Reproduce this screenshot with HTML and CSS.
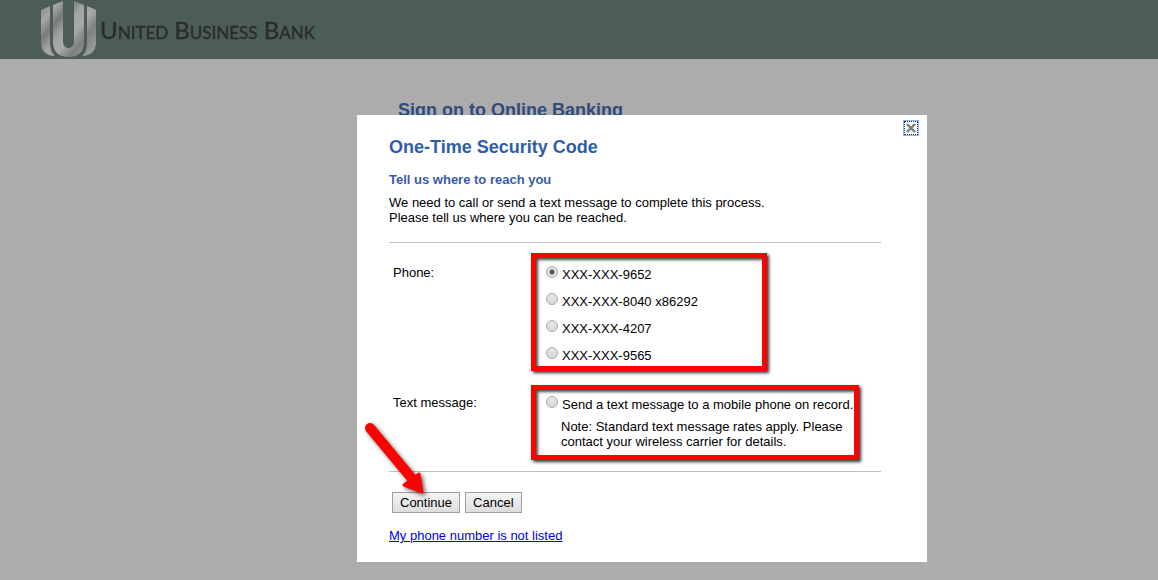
FILE: index.html
```html
<!DOCTYPE html>
<html lang="en">
<head>
    <meta charset="UTF-8">
    <meta name="viewport" content="width=device-width, initial-scale=1.0">
    <title>United Business Bank - Online Banking</title>
    <link rel="stylesheet" href="styles.css">
</head>
<body>

    <header class="site-header">
        <svg class="logo" width="55" height="57" viewBox="0 0 55 57" aria-hidden="true">
            <defs>
                <linearGradient id="metal" gradientUnits="userSpaceOnUse" x1="0" y1="10" x2="50" y2="52">
                    <stop offset="0" stop-color="#8f9192"/>
                    <stop offset="0.12" stop-color="#a5a6a6"/>
                    <stop offset="0.28" stop-color="#77797b"/>
                    <stop offset="0.45" stop-color="#a3a5a5"/>
                    <stop offset="0.6" stop-color="#a8a9a9"/>
                    <stop offset="0.78" stop-color="#7e8082"/>
                    <stop offset="1" stop-color="#9a9c9c"/>
                </linearGradient>
            </defs>
            <g fill="url(#metal)">
                <path d="M0 9 L9 5 V41 C9 47 10 51 14 55 C5 55 0 49 0 42 Z"/>
                <path d="M12 4 L22 0 V40 C22 44 24 47 27.5 47 C31 47 33 44 33 40 V0 L43 4 V41 C43 51 37 56 27.5 56 C18 56 12 51 12 41 Z"/>
                <path d="M55 9 L46 5 V41 C46 47 45 51 41 55 C50 55 55 49 55 42 Z"/>
            </g>
        </svg>
        <span class="bank-name">United Business Bank</span>
    </header>

    <main class="page">
        <h1 class="page-title">Sign on to Online Banking</h1>
    </main>

    <div class="dialog" role="dialog" aria-labelledby="dialog-title">
        <button class="close" type="button" aria-label="Close">
            <svg width="10" height="10" viewBox="0 0 10 10" aria-hidden="true">
                <path d="M1 1 L9 9 M9 1 L1 9" stroke="#777777" stroke-width="2.4"/>
            </svg>
        </button>

        <h2 id="dialog-title">One-Time Security Code</h2>
        <h3>Tell us where to reach you</h3>
        <p class="intro">We need to call or send a text message to complete this process.<br>Please tell us where you can be reached.</p>

        <form>
            <div class="options">
                <div class="row">
                    <span class="row-label" id="phone-label">Phone:</span>
                    <div class="highlight phones" role="group" aria-labelledby="phone-label">
                        <label class="choice"><input type="radio" name="contact" checked><span>XXX-XXX-9652</span></label>
                        <label class="choice"><input type="radio" name="contact"><span>XXX-XXX-8040 x86292</span></label>
                        <label class="choice"><input type="radio" name="contact"><span>XXX-XXX-4207</span></label>
                        <label class="choice"><input type="radio" name="contact"><span>XXX-XXX-9565</span></label>
                    </div>
                </div>
                <div class="row">
                    <span class="row-label" id="text-label">Text message:</span>
                    <div class="highlight texts" role="group" aria-labelledby="text-label">
                        <label class="choice"><input type="radio" name="contact"><span>Send a text message to a mobile phone on record.</span></label>
                        <p class="note">Note: Standard text message rates apply. Please contact your wireless carrier for details.</p>
                    </div>
                </div>
            </div>

            <div class="buttons">
                <button class="btn" type="submit">Continue</button>
                <button class="btn" type="button">Cancel</button>
            </div>
        </form>

        <a class="not-listed" href="#">My phone number is not listed</a>

        <!-- arrow pointing at Continue -->
        <svg class="arrow" width="72" height="82" viewBox="0 0 72 82" aria-hidden="true">
            <path d="M9 9 L53 62" stroke="#ff0000" stroke-width="10" stroke-linecap="round"/>
            <path d="M61 73 L43 66 L58 55 Z" fill="#ff0000" stroke="#ff0000" stroke-width="3" stroke-linejoin="round"/>
        </svg>
    </div>

</body>
</html>
```

FILE: styles.css
```css
body {
    margin: 0;
    min-height: 100vh;
    background-color: #acacac;
    color: #000000;
    font-family: "Liberation Sans", Arial, Helvetica, sans-serif;
    font-size: 13px;
    line-height: 15px;
}
h1, h2, h3, p {
    margin: 0;
}
.site-header {
    display: flex;
    align-items: center;
    gap: 4px;
    height: 59px;
    padding-left: 41px;
    background-color: #4c5d57;
}
.bank-name {
    color: #2a2a2c;
    font-family: Lato, "Open Sans", sans-serif;
    font-size: 24px;
    line-height: 28px;
    font-variant: small-caps;
    -webkit-text-stroke: 0.3px #2a2a2c;
}
.page {
    padding: 40px 32px 0 398px;
}
.page-title {
    color: #2f4b7c;
    font-size: 18px;
    line-height: 22px;
}

/* --- dialog --- */
.dialog {
    position: absolute;
    top: 115px;
    left: 357px;
    width: 570px;
    padding: 21px 46px 19px 32px;
    background-color: #ffffff;
    box-sizing: border-box;
}
.close {
    position: absolute;
    top: 6px;
    right: 9px;
    display: flex;
    align-items: center;
    justify-content: center;
    width: 14px;
    height: 14px;
    padding: 0;
    border: 1px dotted #10307a;
    background-color: #ffffff;
    outline: 1px solid #8cb4f0;
    box-sizing: border-box;
}
.dialog h2 {
    color: #2f5ea8;
    font-size: 18px;
    line-height: 22px;
}
.dialog h3 {
    margin-top: 14px;
    color: #3a5ca6;
    font-size: 13px;
    line-height: 15px;
}
.intro {
    margin-top: 8px;
}
.options {
    display: flex;
    flex-direction: column;
    gap: 14px;
    margin-top: 17px;
    padding: 10px 0 11px 4px;
    border-top: 1px solid #c0c0c0;
    border-bottom: 1px solid #c0c0c0;
}
.row {
    display: flex;
    align-items: flex-start;
}
.row-label {
    width: 138px;
    padding-top: 12px;
}
.row + .row .row-label {
    padding-top: 10px;
}
.highlight {
    padding-left: 10px;
    border: 5px solid #ff0000;
    box-sizing: border-box;
    box-shadow: 2px 2px 3px rgba(0, 0, 0, 0.8), inset 2px 2px 3px rgba(0, 0, 0, 0.7);
}
.phones {
    width: 236px;
}
.texts {
    width: 328px;
    padding-bottom: 6px;
}
.choice {
    display: flex;
    align-items: center;
    gap: 4px;
    height: 27px;
    white-space: nowrap;
}
.choice span {
    padding-top: 5px;
}
.choice input {
    appearance: none;
    flex-shrink: 0;
    width: 12px;
    height: 12px;
    margin: 0;
    border: 1px solid #a8a8a8;
    border-radius: 50%;
    background: linear-gradient(#e6e6e6, #d8d8d8);
    box-sizing: border-box;
}
.choice input:checked {
    background: radial-gradient(circle, #5c5c5c 0 2px, #e2e2e2 3px);
}
.texts .choice {
    height: 24px;
}
.note {
    padding: 5px 8px 0 15px;
}

/* --- buttons and link --- */
.buttons {
    display: flex;
    gap: 5px;
    margin: 20px 0 15px 3px;
}
.btn {
    height: 21px;
    padding: 0 7px;
    border: 1px solid #a0a0a0;
    background: linear-gradient(#f4f4f4, #dddddd);
    color: #000000;
    font-family: inherit;
    font-size: 13px;
    line-height: 15px;
}
.not-listed {
    color: #0000ee;
}
.arrow {
    position: absolute;
    top: 304px;
    left: 4px;
    fill: none;
    filter: drop-shadow(2px 2px 2px rgba(0, 0, 0, 0.6));
    pointer-events: none;
}
```
